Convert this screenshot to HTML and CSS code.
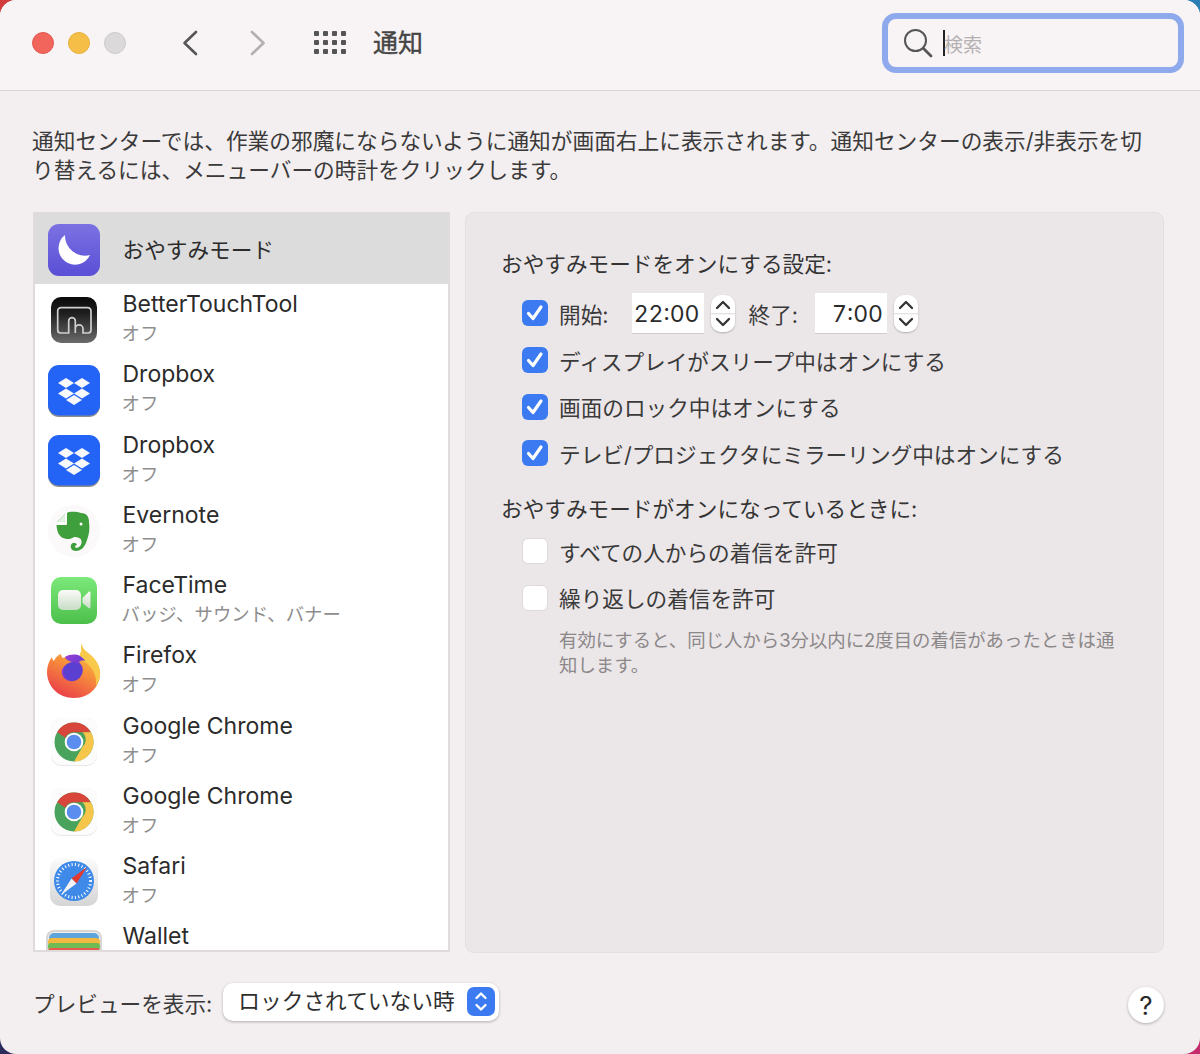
FILE: index.html
```html
<!DOCTYPE html>
<html lang="ja">
<head>
<meta charset="utf-8">
<title>通知</title>
<link rel="stylesheet" href="styles.css">
</head>
<body>
<svg class="defs" width="0" height="0" aria-hidden="true">
  <defs>
    <symbol id="dropbox" viewBox="0 0 52 52">
      <rect x="0" y="1" width="52" height="51" rx="11" fill="#8d8d8d"/>
      <rect x="0" y="0" width="52" height="50.500" rx="11" fill="#2364f6"/>
      <path fill="#f7f8fb" d="M18 13l8 5-8 5-8-5zM34 13l8 5-8 5-8-5zM18 23.500l8 5-8 5-8-5zM34 23.500l8 5-8 5-8-5zM26 30l8 5-8 5-8-5z"/>
    </symbol>
    <symbol id="chrome" viewBox="0 0 52 52">
      <rect x="3" y="2" width="46" height="48" rx="10" fill="#e9e6e7"/>
      <rect x="3" y="2" width="46" height="47" rx="10" fill="#fdfcfc"/>
      <circle cx="26" cy="26" r="19.500" fill="#4aa35c"/>
      <path fill="#d8453a" d="M26 6.500a19.500 19.500 0 0 1 16.900 9.750H26a9.800 9.800 0 0 0-8.700 5.400L9.200 16.200A19.500 19.500 0 0 1 26 6.500z"/>
      <path fill="#f5c64a" d="M42.900 16.250A19.500 19.500 0 0 1 26 45.500l8.400-14.600a9.800 9.800 0 0 0 0-14.650z"/>
      <circle cx="26" cy="26" r="9.300" fill="#fff"/>
      <circle cx="26" cy="26" r="7.300" fill="#5a8dee"/>
    </symbol>
    <symbol id="check" viewBox="0 0 26 26">
      <path d="M6.500 13.500l4.500 5 8-11.500" fill="none" stroke="#fff" stroke-width="3.200" stroke-linecap="round" stroke-linejoin="round"/>
    </symbol>
    <symbol id="updown" viewBox="0 0 24 37">
      <path d="M6 13l6-6 6 6M6 24l6 6 6-6" fill="none" stroke="#333" stroke-width="2.300" stroke-linecap="round" stroke-linejoin="round"/>
    </symbol>
  </defs>
</svg>

<div class="window">
  <header class="titlebar">
    <div class="lights">
      <span class="light light-red"></span>
      <span class="light light-yellow"></span>
      <span class="light light-gray"></span>
    </div>
    <svg class="chev" width="16" height="26" viewBox="0 0 16 26"><path d="M14 2L2.500 13 14 24" fill="none" stroke="#565656" stroke-width="2.600" stroke-linecap="round" stroke-linejoin="round"/></svg>
    <svg class="chev chev-next" width="16" height="26" viewBox="0 0 16 26"><path d="M2 2l11.500 11L2 24" fill="none" stroke="#b3b0b1" stroke-width="2.600" stroke-linecap="round" stroke-linejoin="round"/></svg>
    <div class="grid-btn">
      <i></i><i></i><i></i><i></i><i></i><i></i><i></i><i></i><i></i><i></i><i></i><i></i>
    </div>
    <h1 class="title">通知</h1>
    <div class="search">
      <svg width="30" height="30" viewBox="0 0 30 30"><circle cx="12.500" cy="12.500" r="10.500" fill="none" stroke="#555" stroke-width="2"/><path d="M20.500 20.500l7.500 7.500" stroke="#555" stroke-width="2.800" stroke-linecap="round"/></svg>
      <span class="caret"></span>
      <span class="placeholder">検索</span>
    </div>
  </header>

  <p class="desc">通知センターでは、作業の邪魔にならないように通知が画面右上に表示されます。通知センターの表示/非表示を切り替えるには、メニューバーの時計をクリックします。</p>

  <main class="main">
    <div class="list">
      <div class="row row-selected">
        <svg class="icon" width="52" height="52" viewBox="0 0 52 52">
          <defs><linearGradient id="moonbg" x1="0" y1="0" x2="0" y2="1"><stop offset="0" stop-color="#7c71e2"/><stop offset="1" stop-color="#5a4fd6"/></linearGradient></defs>
          <rect x="0" y="0" width="52" height="52" rx="11" fill="url(#moonbg)"/>
          <path fill="#fff" d="M17 11A16.500 16.500 0 1 0 42 31 20 20 0 0 1 17 11z"/>
        </svg>
        <div class="texts"><div class="name name-jp">おやすみモード</div></div>
      </div>

      <div class="row">
        <svg class="icon" width="52" height="52" viewBox="0 0 52 52">
          <defs><linearGradient id="bttbg" x1="0" y1="0" x2="0" y2="1"><stop offset="0" stop-color="#0a0a0a"/><stop offset=".35" stop-color="#1e1e1e"/><stop offset="1" stop-color="#6b6b6b"/></linearGradient></defs>
          <rect x="3" y="3" width="46" height="46" rx="10" fill="url(#bttbg)"/>
          <path fill="none" stroke="#cfcfcf" stroke-width="1.700" d="M27.300 39V27a3.300 3.300 0 0 0-6.600 0V39H12.700a3 3 0 0 1-3-3V17A3.300 3.300 0 0 1 13 13.700H39.700A3.300 3.300 0 0 1 43 17V36a3 3 0 0 1-3 3H35V34.700a3.800 3.800 0 0 0-7.700 0"/>
        </svg>
        <div class="texts"><div class="name">BetterTouchTool</div><div class="sub">オフ</div></div>
      </div>

      <div class="row">
        <svg class="icon icon-dropbox" width="52" height="52"><use href="#dropbox"/></svg>
        <div class="texts"><div class="name">Dropbox</div><div class="sub">オフ</div></div>
      </div>

      <div class="row">
        <svg class="icon icon-dropbox" width="52" height="52"><use href="#dropbox"/></svg>
        <div class="texts"><div class="name">Dropbox</div><div class="sub">オフ</div></div>
      </div>

      <div class="row">
        <svg class="icon" width="52" height="52" viewBox="0 0 52 52">
          <circle cx="26" cy="26" r="26" fill="#fbf9f9"/>
          <path fill="#3f9f3d" d="M19 8C22 6 30 7 33 8C39 8 41 12 41 17C42 24 41 30 39 35C37 42 33 46 28 46C24 46 22 43 23 40C24 37 28 37 29 40C27 40 26.500 42 28 43C32 43 34 39 33.500 36C33 33 30 32 26 32C22 35 18 34 15 33C11 31 9 27 8.500 20L18 20C19 20 19 19 19 18Z"/>
          <path fill="#3f9f3d" d="M9 17l8-8v7c0 .6-.4 1-1 1z"/>
          <path fill="#e4f1e2" d="M17 9L9 17h7c.6 0 1-.4 1-1z"/>
          <circle cx="33" cy="19" r="1.500" fill="#fff"/>
        </svg>
        <div class="texts"><div class="name">Evernote</div><div class="sub">オフ</div></div>
      </div>

      <div class="row">
        <svg class="icon" width="52" height="52" viewBox="0 0 52 52">
          <defs><linearGradient id="ftbg" x1="0" y1="0" x2="0" y2="1"><stop offset="0" stop-color="#7ce97a"/><stop offset="1" stop-color="#4cbf4a"/></linearGradient>
          <linearGradient id="ftcam" x1="0" y1="0" x2="0" y2="1"><stop offset="0" stop-color="#fbfbf8"/><stop offset="1" stop-color="#c8dcc6"/></linearGradient></defs>
          <rect x="3" y="2" width="46" height="47" rx="10" fill="url(#ftbg)"/>
          <rect x="10" y="15" width="23" height="20" rx="5" fill="url(#ftcam)"/>
          <path fill="url(#ftcam)" d="M34.500 23l6-6c1-.8 2-.3 2 1v14c0 1.300-1 1.800-2 1l-6-5z"/>
        </svg>
        <div class="texts"><div class="name">FaceTime</div><div class="sub">バッジ、サウンド、バナー</div></div>
      </div>

      <div class="row">
        <svg class="icon icon-ff" width="56" height="56" viewBox="0 0 56 56">
          <defs><linearGradient id="ffbg" x1=".8" y1="0" x2=".3" y2="1"><stop offset="0" stop-color="#f9d252"/><stop offset=".45" stop-color="#f7933a"/><stop offset="1" stop-color="#ea3e4a"/></linearGradient>
          <linearGradient id="ffin" x1="0" y1="0" x2="1" y2="1"><stop offset="0" stop-color="#a03ed6"/><stop offset="1" stop-color="#4a3ccf"/></linearGradient></defs>
          <path fill="url(#ffbg)" d="M35 1c1 4 3 7 7 10 6 4 11 11 12 18 1 14-9 27-26 27C12 56 1 44 1 30c0-6 2-11 5-15 0 2 1 3 2 4 1-3 4-6 7-7 0 2 1 3 2 4 5-2 11-2 15 1 3-5 4-10 3-16z"/>
          <path fill="#f9c94c" d="M35 1c1 4 3 7 7 10 6 4 11 11 12 18 .4 5-1 10-4 15 1-8-2-18-11-24-2-1.500-5-2-7-3 3-5 4-10 3-16z"/>
          <path fill="url(#ffin)" d="M19 15c5-3 11-3 15-1 3 2 5 4 5 5-3-1-5 0-6 1 3 3 5 7 3 12-2 5-7 8-12 7-6-1-9-6-8-11 1-3 3-5 6-6 2 0 3-1 4-2-3-1-6-2-7-5z"/>
          <circle cx="26.500" cy="29" r="9" fill="#5a3fd0"/>
        </svg>
        <div class="texts"><div class="name">Firefox</div><div class="sub">オフ</div></div>
      </div>

      <div class="row">
        <svg class="icon" width="52" height="52"><use href="#chrome"/></svg>
        <div class="texts"><div class="name">Google Chrome</div><div class="sub">オフ</div></div>
      </div>

      <div class="row">
        <svg class="icon" width="52" height="52"><use href="#chrome"/></svg>
        <div class="texts"><div class="name">Google Chrome</div><div class="sub">オフ</div></div>
      </div>

      <div class="row">
        <svg class="icon" width="52" height="52" viewBox="0 0 52 52">
          <defs><linearGradient id="safbg" x1="0" y1="0" x2="0" y2="1"><stop offset="0" stop-color="#fbfbfb"/><stop offset="1" stop-color="#d5d5d5"/></linearGradient></defs>
          <rect x="2" y="2" width="48" height="48" rx="10" fill="url(#safbg)"/>
          <circle cx="26" cy="25" r="20" fill="#3f8ae8"/>
          <circle cx="26" cy="25" r="16.500" fill="none" stroke="#fff" stroke-width="3" stroke-dasharray="1 2.400"/>
          <path fill="#e4392f" d="M39 11L23.500 22.500l5 5z"/>
          <path fill="#f4f4f4" d="M13 39l15.500-11.500-5-5z"/>
        </svg>
        <div class="texts"><div class="name">Safari</div><div class="sub">オフ</div></div>
      </div>

      <div class="row row-clipped">
        <svg class="icon icon-wallet" width="56" height="52" viewBox="0 0 56 52">
          <rect x="0" y="0" width="56" height="50" rx="8" fill="#d8d6d5"/>
          <rect x="2" y="2" width="52" height="46" rx="6" fill="#f0efe9"/>
          <path fill="#5fa5dc" d="M3 8a5 5 0 0 1 5-5h40a5 5 0 0 1 5 5v6H3z"/>
          <rect x="2" y="8" width="52" height="8" rx="4" fill="#f3b83f"/>
          <rect x="2" y="13" width="52" height="7" rx="3" fill="#6dbb52"/>
          <rect x="2" y="18" width="52" height="30" rx="3" fill="#e8584f"/>
        </svg>
        <div class="texts"><div class="name">Wallet</div></div>
      </div>
    </div>

    <section class="panel">
      <h2 class="heading">おやすみモードをオンにする設定:</h2>
      <div class="options options-first">
        <div class="option">
          <span class="box box-on"><svg width="26" height="26"><use href="#check"/></svg></span>
          <span class="label label-start">開始:</span>
          <span class="time">22:00</span>
          <span class="stepper"><svg width="24" height="37"><use href="#updown"/></svg></span>
          <span class="label label-end">終了:</span>
          <span class="time">7:00</span>
          <span class="stepper"><svg width="24" height="37"><use href="#updown"/></svg></span>
        </div>
        <div class="option">
          <span class="box box-on"><svg width="26" height="26"><use href="#check"/></svg></span>
          <span class="label">ディスプレイがスリープ中はオンにする</span>
        </div>
        <div class="option">
          <span class="box box-on"><svg width="26" height="26"><use href="#check"/></svg></span>
          <span class="label">画面のロック中はオンにする</span>
        </div>
        <div class="option">
          <span class="box box-on"><svg width="26" height="26"><use href="#check"/></svg></span>
          <span class="label">テレビ/プロジェクタにミラーリング中はオンにする</span>
        </div>
      </div>
      <h2 class="heading heading-second">おやすみモードがオンになっているときに:</h2>
      <div class="options options-second">
        <div class="option">
          <span class="box"></span>
          <span class="label">すべての人からの着信を許可</span>
        </div>
        <div class="option">
          <span class="box"></span>
          <span class="label">繰り返しの着信を許可</span>
        </div>
      </div>
      <p class="note">有効にすると、同じ人から3分以内に2度目の着信があったときは通知します。</p>
    </section>
  </main>

  <footer class="footer">
    <span class="footer-label">プレビューを表示:</span>
    <div class="select">
      <span class="select-text">ロックされていない時</span>
      <span class="select-arrows"><svg width="28" height="29" viewBox="0 0 28 29"><path d="M9.500 11L14 6.500 18.500 11M9.500 18l4.500 4.500 4.500-4.500" fill="none" stroke="#fff" stroke-width="2.400" stroke-linecap="round" stroke-linejoin="round"/></svg></span>
    </div>
    <button class="help" type="button">?</button>
  </footer>
</div>
</body>
</html>
```

FILE: styles.css
```css
* { box-sizing: border-box; }

html, body { margin: 0; height: 100%; }

body {
  background: conic-gradient(#2c7fb5 0 25%, #c42a6c 0 50%, #2c2c5c 0 75%, #d23c3c 0);
  font-family: Inter, "Noto Sans CJK JP", sans-serif;
  color: #2e2e2e;
  overflow: hidden;
}

.defs { position: absolute; }

.window {
  display: flex;
  flex-direction: column;
  width: 1200px;
  height: 1054px;
  background: #f3eeef;
  border-radius: 16px;
  overflow: hidden;
}

/* title bar */
.titlebar {
  display: flex;
  align-items: center;
  height: 91px;
  flex: none;
  padding: 0 16px 5px 32px;
  background: #f8f3f4;
  border-bottom: 1px solid #d8d3d4;
}

.lights { display: flex; gap: 14px; margin-right: 56px; }
.light { width: 22px; height: 22px; border-radius: 50%; }
.light-red { background: #f1655c; border: 1px solid #e2574f; }
.light-yellow { background: #f5bf47; border: 1px solid #e6b03c; }
.light-gray { background: #dcd9da; border: 1px solid #cdcacb; }

.chev { flex: none; margin-right: 52px; }
.chev-next { margin-right: 48px; }

.grid-btn {
  display: grid;
  grid-template-columns: repeat(4, 5px);
  grid-auto-rows: 5px;
  gap: 4px;
  width: 33px;
  margin-right: 26px;
}
.grid-btn i { background: #555; border-radius: 1px; }

.title {
  margin: 0;
  font-size: 25px;
  font-weight: 400;
  -webkit-text-stroke: .4px #454545;
  color: #454545;
  line-height: 30px;
}

.search {
  display: flex;
  align-items: center;
  width: 302px;
  height: 60px;
  margin-left: auto;
  padding-left: 15px;
  border: 6px solid #8faaec;
  border-radius: 14px;
}
.caret { width: 2px; height: 26px; margin-left: 10px; background: #222; }
.placeholder { padding-top: 2px; margin-left: -1px; font-size: 19px; color: #b5b1b2; }

/* description */
.desc {
  flex: none;
  margin: 36px 50px 27px 32px;
  font-size: 21.700px;
  line-height: 29px;
  color: #3a3a3a;
}

/* main */
.main {
  display: flex;
  gap: 15px;
  height: 741px;
  flex: none;
  padding: 0 36px 0 33px;
}

.list {
  width: 417px;
  height: 740px;
  flex: none;
  background: #fff;
  border: 2px solid #dfdadb;
  overflow: hidden;
}

.row {
  display: flex;
  align-items: center;
  height: 70.250px;
  padding-left: 13px;
  gap: 22.500px;
}

.row-selected {
  height: 70px;
  background: #dcdcdc;
}

.row-clipped { align-items: flex-start; }
.row-clipped .texts { padding-top: 6px; }

.icon { flex: none; margin-top: 2px; }
.icon-dropbox { margin-top: 3px; }
.icon-ff { margin: 0 -2px; }
.icon-wallet { margin: 14px -2px 0; }

.texts { min-width: 0; }
.name { font-size: 23px; line-height: 29px; color: #2b2b2b; }
.name-jp { font-size: 21.650px; position: relative; top: 1px; }
.sub { font-size: 18.400px; line-height: 29px; color: #8e8e8e; margin-left: -1px; }

/* panel */
.panel {
  flex: 1;
  padding: 37px 36px 0 35px;
  background: #ebe6e8;
  border: 1px solid #e4dfe0;
  border-radius: 9px;
}

.heading {
  margin: 0;
  font-size: 21.650px;
  font-weight: 400;
  line-height: 29px;
  color: #333;
}
.heading-second { margin-top: 18px; }

.options {
  display: flex;
  flex-direction: column;
  padding-left: 21px;
}
.options-first { margin-top: 11px; }
.options-second { margin-top: 4px; }

.option {
  display: flex;
  align-items: center;
  height: 46.700px;
  gap: 11px;
}

.box {
  flex: none;
  width: 26px;
  height: 26px;
  border-radius: 6px;
  background: #fff;
  border: 1px solid #dedadb;
}
.box-on { background: #3b7af0; border: 0; }
.box svg { display: block; }

.label { font-size: 21.650px; color: #3a3a3a; white-space: nowrap; }
.label-start { margin-right: 12px; }
.label-end { margin-right: 6px; }

.time {
  width: 72px;
  height: 41px;
  flex: none;
  margin-right: -4px;
  background: #fff;
  border-bottom: 1px solid #d0cccd;
  font-size: 23px;
  line-height: 43px;
  text-align: right;
  padding-right: 4px;
  color: #2b2b2b;
  font-variant-numeric: tabular-nums;
}

.stepper {
  width: 24px;
  height: 37px;
  flex: none;
  background: linear-gradient(#fff 0 48%, #e6e2e3 50%, #fff 54%);
  border-radius: 10px;
  box-shadow: 0 1px 2px rgba(0, 0, 0, .25);
}
.stepper svg { display: block; }
.stepper + .label { margin-left: 3px; }

.note {
  margin: 7px 5px 0 58px;
  font-size: 18.400px;
  line-height: 25px;
  color: #8b8889;
}

/* footer */
.footer {
  display: flex;
  align-items: center;
  flex: 1;
  padding: 0 36px 5px 33px;
}

.footer-label { font-size: 21.650px; color: #3a3a3a; margin-right: 11px; margin-top: 3px; }

.select {
  display: flex;
  align-items: center;
  justify-content: space-between;
  width: 276px;
  height: 38px;
  margin-top: 1px;
  padding: 0 4px 0 15px;
  background: #fff;
  border-radius: 10px;
  box-shadow: 0 1px 3px rgba(0, 0, 0, .28);
}
.select-text { padding-bottom: 5px; font-size: 21.700px; color: #2e2e2e; }
.select-arrows {
  display: block;
  width: 28px;
  height: 29px;
  background: #3b7af0;
  border-radius: 7px;
}
.select-arrows svg { display: block; }

.help {
  width: 36px;
  height: 36px;
  margin-left: auto;
  margin-top: 8px;
  padding: 0;
  border: 0;
  border-radius: 50%;
  background: #fff;
  box-shadow: 0 1px 3px rgba(0, 0, 0, .28);
  font-family: Inter, sans-serif;
  font-size: 26px;
  font-weight: 400;
  color: #2a2a2a;
}
```
